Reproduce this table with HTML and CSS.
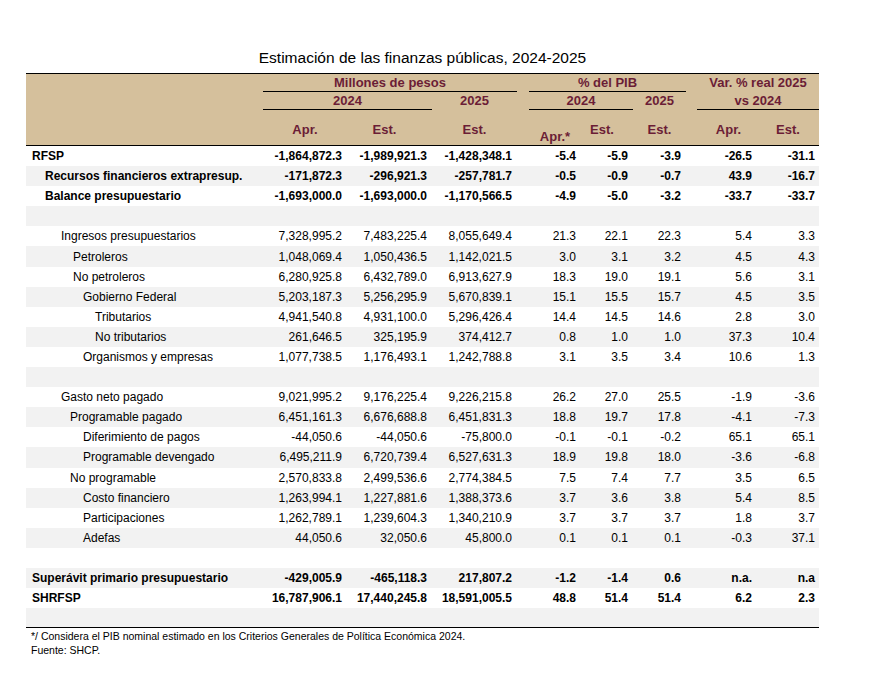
FILE: index.html
```html
<!DOCTYPE html>
<html lang="es">
<head>
<meta charset="utf-8">
<title>Estimación de las finanzas públicas, 2024-2025</title>
<link rel="stylesheet" href="styles.css">
</head>
<body>
<div class="wrap">
  <div class="title">Estimación de las finanzas públicas, 2024-2025</div>
  <table class="fin">
    <colgroup>
      <col class="c-label"><col class="c1"><col class="c2"><col class="c3"><col class="c4"><col class="c5"><col class="c6"><col class="c7"><col class="c8">
    </colgroup>
    <thead>
      <tr class="h1">
        <th class="blank"></th>
        <th colspan="3"><div class="grp">Millones de pesos</div></th>
        <th colspan="3"><div class="grp g-pib">% del PIB</div></th>
        <th colspan="2"><div class="grp g-var nol">Var. % real 2025</div></th>
      </tr>
      <tr class="h2">
        <th class="blank"></th>
        <th colspan="2"><div class="grp">2024</div></th>
        <th><div class="grp nol">2025</div></th>
        <th colspan="2"><div class="grp g-pib">2024</div></th>
        <th><div class="grp nol">2025</div></th>
        <th colspan="2"><div class="grp g-var">vs 2024</div></th>
      </tr>
      <tr class="h3">
        <th class="blank"></th>
        <th>Apr.</th>
        <th class="est">Est.</th>
        <th>Est.</th>
        <th class="aprs">Apr.*</th>
        <th class="est">Est.</th>
        <th>Est.</th>
        <th class="apr7">Apr.</th>
        <th>Est.</th>
      </tr>
    </thead>
    <tbody>
      <tr class="b"><td class="l0">RFSP</td><td>-1,864,872.3</td><td>-1,989,921.3</td><td>-1,428,348.1</td><td>-5.4</td><td>-5.9</td><td>-3.9</td><td>-26.5</td><td>-31.1</td></tr>
      <tr class="b"><td class="l1">Recursos financieros extrapresup.</td><td>-171,872.3</td><td>-296,921.3</td><td>-257,781.7</td><td>-0.5</td><td>-0.9</td><td>-0.7</td><td>43.9</td><td>-16.7</td></tr>
      <tr class="b"><td class="l1">Balance presupuestario</td><td>-1,693,000.0</td><td>-1,693,000.0</td><td>-1,170,566.5</td><td>-4.9</td><td>-5.0</td><td>-3.2</td><td>-33.7</td><td>-33.7</td></tr>
      <tr class="e"><td></td><td></td><td></td><td></td><td></td><td></td><td></td><td></td><td></td></tr>
      <tr><td class="l2">Ingresos presupuestarios</td><td>7,328,995.2</td><td>7,483,225.4</td><td>8,055,649.4</td><td>21.3</td><td>22.1</td><td>22.3</td><td>5.4</td><td>3.3</td></tr>
      <tr><td class="l3">Petroleros</td><td>1,048,069.4</td><td>1,050,436.5</td><td>1,142,021.5</td><td>3.0</td><td>3.1</td><td>3.2</td><td>4.5</td><td>4.3</td></tr>
      <tr><td class="l3">No petroleros</td><td>6,280,925.8</td><td>6,432,789.0</td><td>6,913,627.9</td><td>18.3</td><td>19.0</td><td>19.1</td><td>5.6</td><td>3.1</td></tr>
      <tr><td class="l4">Gobierno Federal</td><td>5,203,187.3</td><td>5,256,295.9</td><td>5,670,839.1</td><td>15.1</td><td>15.5</td><td>15.7</td><td>4.5</td><td>3.5</td></tr>
      <tr><td class="l5">Tributarios</td><td>4,941,540.8</td><td>4,931,100.0</td><td>5,296,426.4</td><td>14.4</td><td>14.5</td><td>14.6</td><td>2.8</td><td>3.0</td></tr>
      <tr><td class="l5">No tributarios</td><td>261,646.5</td><td>325,195.9</td><td>374,412.7</td><td>0.8</td><td>1.0</td><td>1.0</td><td>37.3</td><td>10.4</td></tr>
      <tr><td class="l4">Organismos y empresas</td><td>1,077,738.5</td><td>1,176,493.1</td><td>1,242,788.8</td><td>3.1</td><td>3.5</td><td>3.4</td><td>10.6</td><td>1.3</td></tr>
      <tr class="e"><td></td><td></td><td></td><td></td><td></td><td></td><td></td><td></td><td></td></tr>
      <tr><td class="l2">Gasto neto pagado</td><td>9,021,995.2</td><td>9,176,225.4</td><td>9,226,215.8</td><td>26.2</td><td>27.0</td><td>25.5</td><td>-1.9</td><td>-3.6</td></tr>
      <tr><td class="l2b">Programable pagado</td><td>6,451,161.3</td><td>6,676,688.8</td><td>6,451,831.3</td><td>18.8</td><td>19.7</td><td>17.8</td><td>-4.1</td><td>-7.3</td></tr>
      <tr><td class="l4">Diferimiento de pagos</td><td>-44,050.6</td><td>-44,050.6</td><td>-75,800.0</td><td>-0.1</td><td>-0.1</td><td>-0.2</td><td>65.1</td><td>65.1</td></tr>
      <tr><td class="l4">Programable devengado</td><td>6,495,211.9</td><td>6,720,739.4</td><td>6,527,631.3</td><td>18.9</td><td>19.8</td><td>18.0</td><td>-3.6</td><td>-6.8</td></tr>
      <tr><td class="l2b">No programable</td><td>2,570,833.8</td><td>2,499,536.6</td><td>2,774,384.5</td><td>7.5</td><td>7.4</td><td>7.7</td><td>3.5</td><td>6.5</td></tr>
      <tr><td class="l4">Costo financiero</td><td>1,263,994.1</td><td>1,227,881.6</td><td>1,388,373.6</td><td>3.7</td><td>3.6</td><td>3.8</td><td>5.4</td><td>8.5</td></tr>
      <tr><td class="l4">Participaciones</td><td>1,262,789.1</td><td>1,239,604.3</td><td>1,340,210.9</td><td>3.7</td><td>3.7</td><td>3.7</td><td>1.8</td><td>3.7</td></tr>
      <tr><td class="l4">Adefas</td><td>44,050.6</td><td>32,050.6</td><td>45,800.0</td><td>0.1</td><td>0.1</td><td>0.1</td><td>-0.3</td><td>37.1</td></tr>
      <tr class="e"><td></td><td></td><td></td><td></td><td></td><td></td><td></td><td></td><td></td></tr>
      <tr class="b"><td class="l0">Superávit primario presupuestario</td><td>-429,005.9</td><td>-465,118.3</td><td>217,807.2</td><td>-1.2</td><td>-1.4</td><td>0.6</td><td>n.a.</td><td>n.a</td></tr>
      <tr class="b"><td class="l0">SHRFSP</td><td>16,787,906.1</td><td>17,440,245.8</td><td>18,591,005.5</td><td>48.8</td><td>51.4</td><td>51.4</td><td>6.2</td><td>2.3</td></tr>
      <tr class="e last"><td></td><td></td><td></td><td></td><td></td><td></td><td></td><td></td><td></td></tr>
    </tbody>
  </table>
  <div class="notes">
    <p>*/ Considera el PIB nominal estimado en los Criterios Generales de Política Económica 2024.</p>
    <p>Fuente: SHCP.</p>
  </div>
</div>
</body>
</html>
```

FILE: styles.css
```css
html, body {
  margin: 0;
  padding: 0;
  background: #ffffff;
}

body {
  font-family: "Liberation Sans", Arial, sans-serif;
  color: #000;
}

.wrap {
  width: 793px;
  margin-left: 26px;
  padding-top: 49px;
}

.title {
  text-align: center;
  font-size: 15.5px;
  line-height: 18px;
  height: 18px;
  margin-bottom: 6px;
}

.fin {
  width: 793px;
  table-layout: fixed;
  border-collapse: separate;
  border-spacing: 0;
  font-size: 12px;
}

.c-label { width: 237px; }
.c1 { width: 84px; }
.c2 { width: 85px; }
.c3 { width: 85px; }
.c4 { width: 64px; }
.c5 { width: 52px; }
.c6 { width: 53px; }
.c7 { width: 71px; }
.c8 { width: 62px; }

/* header */
.fin thead th {
  background: #d5c09c;
  color: #6b1d36;
  font-weight: bold;
  font-size: 13px;
  padding: 0;
  text-align: center;
  vertical-align: middle;
}

.fin thead tr.h1 th {
  border-top: 1px solid #000;
  height: 17px;
}

.fin thead tr.h2 th {
  height: 18px;
}

.fin thead tr.h3 th {
  height: 36px;
  border-bottom: 1px solid #000;
  padding-top: 3px;
  box-sizing: border-box;
}

.grp {
  border-bottom: 1px solid #000;
  line-height: 17px;
  height: 17px;
}

.grp.nol {
  border-bottom-color: transparent;
}

.grp.g-pib {
  margin-left: 12px;
}

.grp.g-var {
  margin-left: 11px;
}

.fin thead tr.h3 th.aprs {
  vertical-align: bottom;
  padding-top: 0;
  padding-bottom: 1px;
  padding-left: 12px;
}

.fin thead tr.h3 th.est {
  padding-right: 10px;
}

.fin thead tr.h3 th.apr7 {
  padding-left: 14px;
}

/* body */
.fin tbody td {
  height: 20.1px;
  padding: 0 5px 0 0;
  text-align: right;
  vertical-align: middle;
  white-space: nowrap;
  line-height: 14px;
}

.fin tbody td:first-child {
  text-align: left;
  padding-right: 0;
}

.fin tbody td:nth-child(9) { padding-right: 4px; }

.fin tbody tr:nth-child(even) td {
  background: #f2f2f2;
}

.fin tbody tr.b td {
  font-weight: bold;
}

.fin tbody tr.last td {
  height: 19px;
  border-bottom: 1px solid #000;
}

.fin tbody td.l0 { padding-left: 6px; }
.fin tbody td.l1 { padding-left: 19px; }
.fin tbody td.l2 { padding-left: 35px; }
.fin tbody td.l2b { padding-left: 44px; }
.fin tbody td.l3 { padding-left: 47px; }
.fin tbody td.l4 { padding-left: 57px; }
.fin tbody td.l5 { padding-left: 69px; }

/* notes */
.notes {
  padding-left: 5px;
  padding-top: 1px;
  font-size: 10.5px;
  line-height: 14px;
}

.notes p {
  margin: 0;
}
```
